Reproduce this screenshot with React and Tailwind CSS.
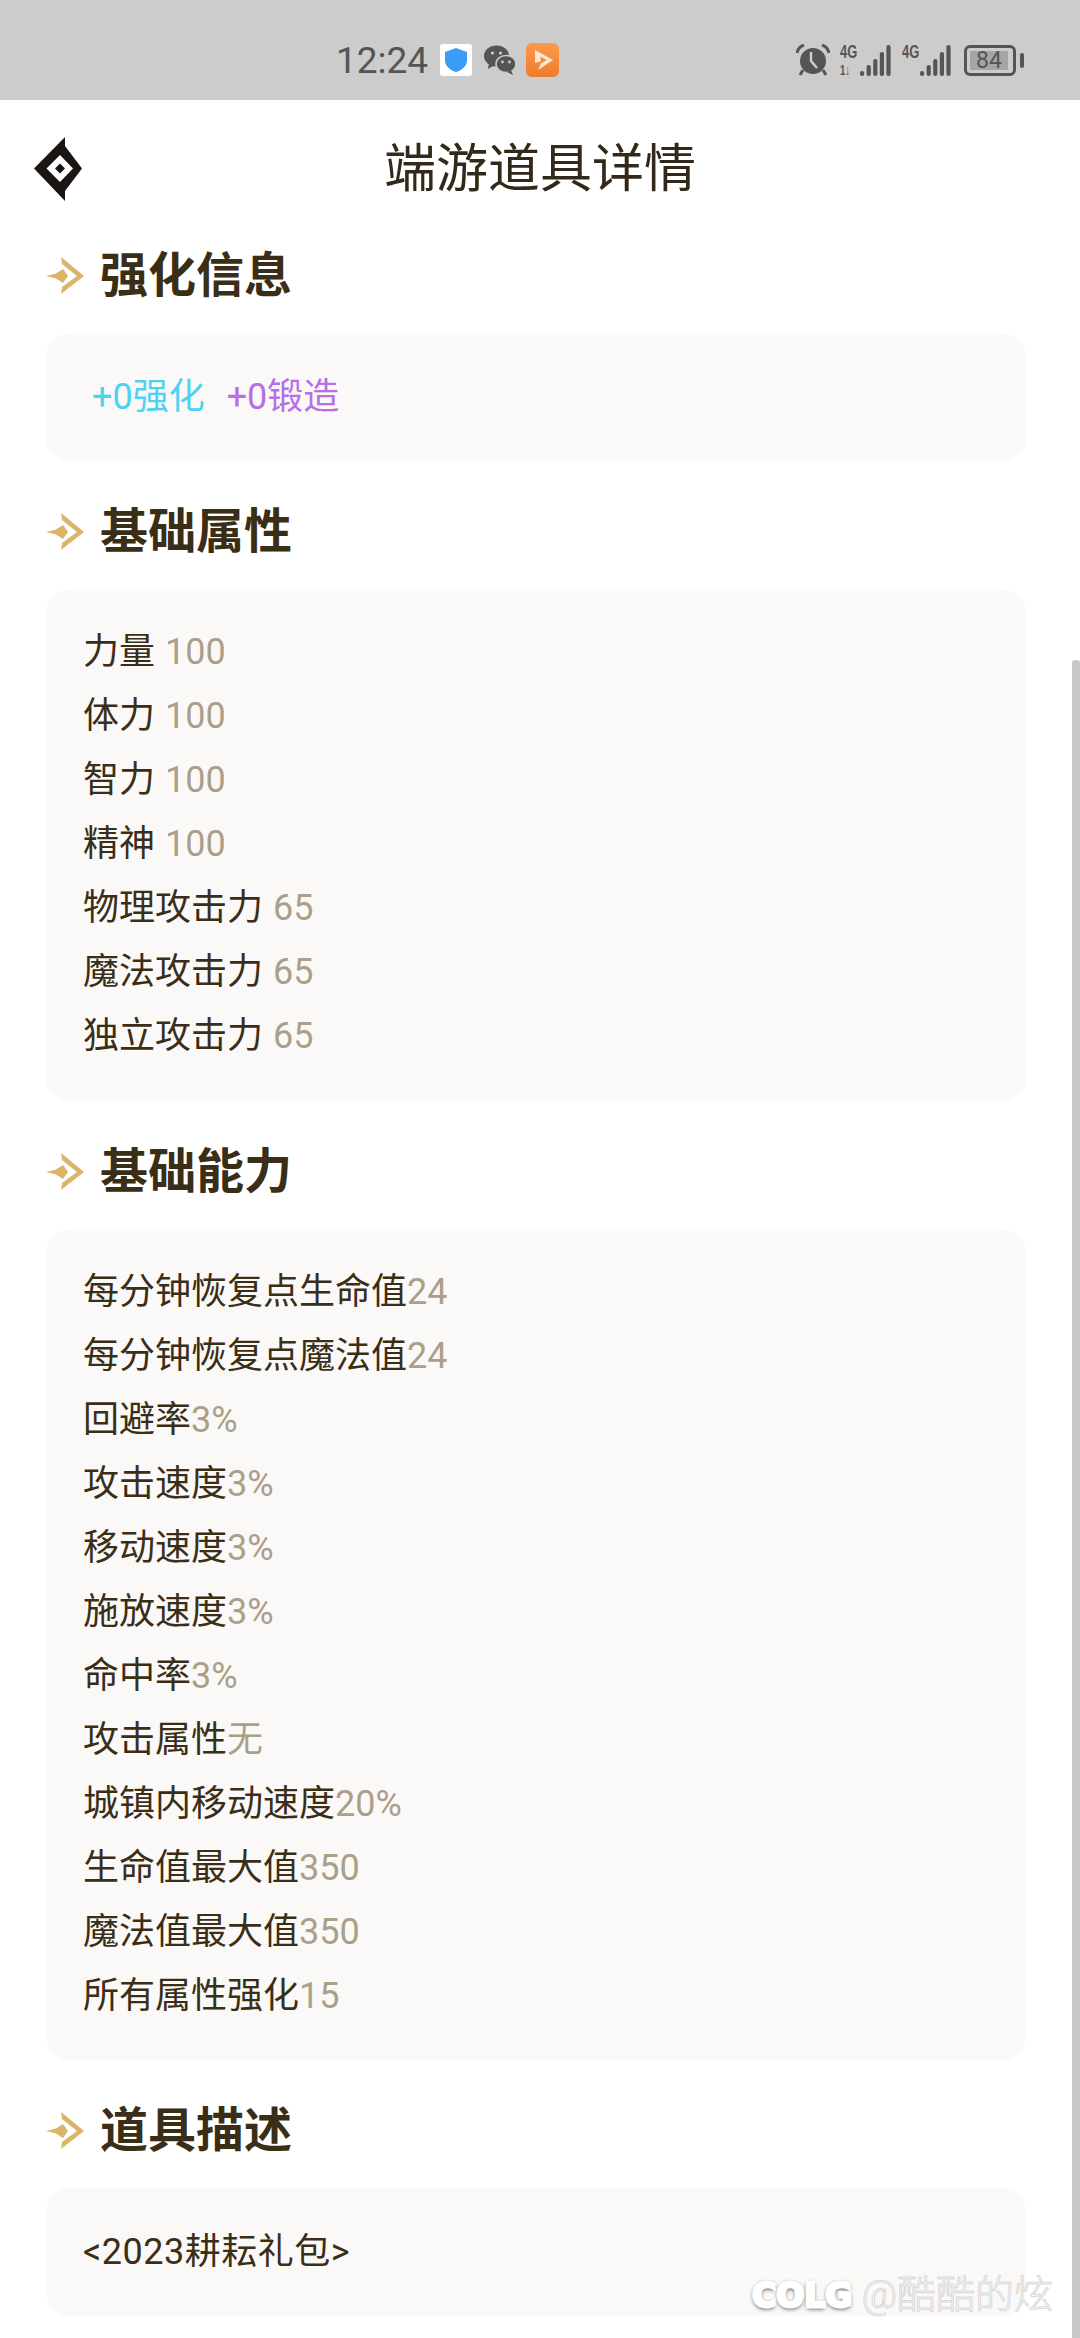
const fontStack = "font-['Roboto','Noto_Sans_CJK_SC',sans-serif]";

const basicAttrs = [
    ['力量', '100'],
    ['体力', '100'],
    ['智力', '100'],
    ['精神', '100'],
    ['物理攻击力', '65'],
    ['魔法攻击力', '65'],
    ['独立攻击力', '65'],
];

const abilities = [
    ['每分钟恢复点生命值', '24'],
    ['每分钟恢复点魔法值', '24'],
    ['回避率', '3%'],
    ['攻击速度', '3%'],
    ['移动速度', '3%'],
    ['施放速度', '3%'],
    ['命中率', '3%'],
    ['攻击属性', '无'],
    ['城镇内移动速度', '20%'],
    ['生命值最大值', '350'],
    ['魔法值最大值', '350'],
    ['所有属性强化', '15'],
];

function SignalBars({ heights }) {
    return (
        <svg width="31" height="32" viewBox="0 0 31 32" fill="#555">
            {heights.map((h, i) => (
                <rect key={i} x={i * 6.6} y={32 - h} width="4.2" height={h} rx="2" />
            ))}
        </svg>
    );
}

function StatusBar() {
    return (
        <div className="h-[100px] bg-[#cccccc] flex items-center pl-[336px] pt-[20px] text-[#555555]">
            <span className="w-[92px] text-[37px] leading-none font-['Roboto',sans-serif]">12:24</span>
            <div className="ml-[12px] w-[32px] h-[32px] bg-white rounded-[3px] flex items-center justify-center">
                <svg width="24" height="26" viewBox="0 0 24 26">
                    <path d="M12 1 L23 5 V13 C23 19 18 23 12 25 C6 23 1 19 1 13 V5 Z" fill="#3b9cf5" />
                </svg>
            </div>
            <svg className="ml-[12px]" width="32" height="30" viewBox="0 0 32 30" fill="#555">
                <ellipse cx="12.5" cy="11" rx="12.5" ry="10.5" />
                <path d="M5 18 L4 24 L11 20 Z" />
                <ellipse cx="22" cy="19" rx="10" ry="8.6" stroke="#ccc" strokeWidth="1.5" />
                <path d="M27 25 L29 30 L23 27 Z" />
                <circle cx="8.5" cy="8" r="1.6" fill="#ccc" />
                <circle cx="16.5" cy="8" r="1.6" fill="#ccc" />
                <circle cx="18.5" cy="17" r="1.4" fill="#ccc" />
                <circle cx="25.5" cy="17" r="1.4" fill="#ccc" />
            </svg>
            <div className="ml-[10px] w-[33px] h-[34px] rounded-[6px] bg-gradient-to-b from-[#fb9a4b] to-[#f07a2c] flex items-center justify-center">
                <svg width="24" height="24" viewBox="0 0 24 24">
                    <path d="M4 2 L22 12 L7 22 L11 13 L4 15 Z" fill="#fde6d3" />
                    <path d="M9.5 8.5 L15.5 12 L10 15.5 Z" fill="#f58a3c" />
                </svg>
            </div>

            <svg className="ml-[237px]" width="34" height="32" viewBox="0 0 34 32" fill="#555">
                <circle cx="17" cy="17" r="13" />
                <path d="M1 9 C2 4 5 2 8 1" stroke="#555" strokeWidth="3" fill="none" />
                <path d="M33 9 C32 4 29 2 26 1" stroke="#555" strokeWidth="3" fill="none" />
                <path d="M7 26 L4 31 M27 26 L30 31" stroke="#555" strokeWidth="3" />
                <path d="M15 8 V17 L21 24" stroke="#ccc" strokeWidth="2.4" fill="none" />
            </svg>
            <div className="ml-[10px] w-[20px] h-[32px] flex flex-col justify-between font-['Liberation_Sans',sans-serif] font-bold text-[19px] leading-[16px]">
                <span className="origin-left scale-x-[0.68] whitespace-nowrap">4G</span>
                <span className="origin-left scale-x-[0.68] text-[14px] leading-[12px] whitespace-nowrap">1↓</span>
            </div>
            <SignalBars heights={[5, 11, 17, 24, 31]} />
            <div className="ml-[11px] w-[18px] h-[32px] font-['Liberation_Sans',sans-serif] font-bold text-[19px] leading-[16px]">
                <span className="block origin-left scale-x-[0.68] whitespace-nowrap">4G</span>
            </div>
            <SignalBars heights={[5, 11, 17, 24, 31]} />
            <div className="ml-[13px] w-[52px] h-[31px] border-[3px] border-[#555555] rounded-[6px] p-[3px]">
                <div className="w-[38px] h-full bg-[#a5a5a5] rounded-[1px] flex items-center justify-center text-[23px] leading-none font-['Roboto',sans-serif]">84</div>
            </div>
            <div className="ml-[4px] w-[4px] h-[15px] bg-[#555555] rounded-full" />
        </div>
    );
}

function Logo() {
    return (
        <svg width="48" height="64" viewBox="0 0 48 64">
            <path d="M0 31.5 L31 0 L31 9 L48 31.5 L31 54 L31 64 Z" fill="#1b1613" />
            <path d="M26 18 L39 31.5 L26 45 L12.5 31.5 Z" fill="#fff" />
            <path d="M26 26.5 L31 31.5 L26 36.5 L21 31.5 Z" fill="#1b1613" />
        </svg>
    );
}

function ArrowIcon() {
    return (
        <svg width="38" height="38" viewBox="0 0 38 38" className="shrink-0">
            <path d="M0 19 L10 16.5 L17 12 L22 19 L17 26 L10 21.5 Z" fill="#dcb467" />
            <path d="M15 0 L38 19 L15 37 L16 30 L31 19 L16 7 Z" fill="#dcb467" />
        </svg>
    );
}

function SectionTitle({ children, first }) {
    return (
        <div className={`h-[72px] flex items-center gap-[16px] mb-[21px] ${first ? '' : 'mt-[35px]'}`}>
            <ArrowIcon />
            <h2 className="text-[48px] leading-none font-bold text-[#3a2e17]">{children}</h2>
        </div>
    );
}

function AttrList({ rows, spaced }) {
    return (
        <div className="bg-[#faf9f8] rounded-[24px] pt-[31px] pb-[32.5px] px-[37px]">
            {rows.map(([label, value]) => (
                <div key={label} className="h-[64px] flex items-center text-[36px] leading-none text-[#3a2e17]">
                    <span>{label}</span>
                    <span className={`text-[#ac9f88] ${spaced ? 'ml-[10px]' : ''}`}>{value}</span>
                </div>
            ))}
        </div>
    );
}

export default function App() {
    return (
        <div className={`relative h-[2338px] overflow-hidden bg-white ${fontStack}`}>
            <StatusBar />

            {/* Nav */}
            <div className="relative h-[140px] flex items-center justify-center">
                <div className="absolute left-[34px] top-[37px]">
                    <Logo />
                </div>
                <h1 className="text-[52px] leading-none font-normal text-[#33291a]">端游道具详情</h1>
            </div>

            <div className="px-[46px] w-[1072px]">
                <SectionTitle first>强化信息</SectionTitle>
                <div className="h-[128px] bg-[#faf9f8] rounded-[24px] pl-[46px] flex items-center text-[36px] leading-none">
                    <span className="text-[#4dd3ef]">+0强化</span>
                    <span className="ml-[22px] text-[#b66fe6]">+0锻造</span>
                </div>

                <SectionTitle>基础属性</SectionTitle>
                <AttrList rows={basicAttrs} spaced />

                <SectionTitle>基础能力</SectionTitle>
                <AttrList rows={abilities} />

                <SectionTitle>道具描述</SectionTitle>
                <div className="h-[128px] bg-[#faf9f8] rounded-[24px] pl-[37px] flex items-center text-[36px] leading-none tracking-[0.5px] text-[#3a2e17]">
                    &lt;2023耕耘礼包&gt;
                </div>
            </div>

            {/* Scrollbar */}
            <div className="absolute right-0 top-[660px] bottom-0 w-[8px] bg-[#c8c8c8] rounded-t-[3px]" />

            {/* Watermark */}
            <div className="absolute left-[752px] top-[2276px] flex items-center gap-[9px]">
                <span className="text-[33px] leading-none font-['DejaVu_Sans',sans-serif] font-bold text-white [-webkit-text-stroke:3px_#ffffff] [text-shadow:0_0_3px_#555,0_2px_4px_#555]">COLG</span>
                <span className="text-[39px] leading-none text-white [-webkit-text-stroke:1px_#d8d8d8] font-light">@酷酷的炫</span>
            </div>
        </div>
    );
}
